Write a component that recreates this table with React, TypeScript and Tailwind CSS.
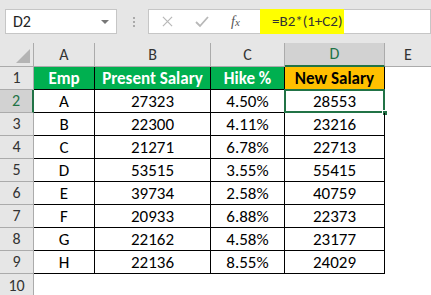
import React from 'react'

const rows = [
  ['A', '27323', '4.50%', '28553'],
  ['B', '22300', '4.11%', '23216'],
  ['C', '21271', '6.78%', '22713'],
  ['D', '53515', '3.55%', '55415'],
  ['E', '39734', '2.58%', '40759'],
  ['F', '20933', '6.88%', '22373'],
  ['G', '22162', '4.58%', '23177'],
  ['H', '22136', '8.55%', '24029'],
]

const font = { fontFamily: 'Carlito, "Open Sans", "Liberation Sans", sans-serif' }

export default function App() {
  return (
    <div className="w-[431px] h-[295px] overflow-hidden bg-white text-[17px] leading-none text-black" style={font}>
      {/* Formula bar */}
      <div className="h-[43px] bg-[#e6e6e6] flex items-start pt-[9px] pl-[5px]">
        <div className="w-[112px] h-[25px] bg-white border border-[#c6c6c6] flex items-center justify-between pl-[7px] pr-[7px] text-[#222] text-[16px]">
          <span>D2</span>
          <span className="w-0 h-0 border-l-[4px] border-r-[4px] border-t-[4px] border-l-transparent border-r-transparent border-t-[#777]" />
        </div>
        <div className="w-[15px] h-[25px] flex flex-col items-center justify-center gap-[2px] ml-[9px]">
          <span className="w-[2px] h-[2px] bg-[#aaa]" />
          <span className="w-[2px] h-[2px] bg-[#aaa]" />
          <span className="w-[2px] h-[2px] bg-[#aaa]" />
        </div>
        <div className="ml-[7px] h-[25px] flex-1 bg-white border border-[#c6c6c6] flex items-center">
          <div className="w-[111px] h-full flex items-center">
            <svg width="11" height="11" viewBox="0 0 12 12" className="ml-[13px]">
              <path d="M1 1 L11 11 M11 1 L1 11" stroke="#b8b8b8" strokeWidth="1.3" />
            </svg>
            <svg width="14" height="12" viewBox="0 0 14 12" className="ml-[22px]">
              <path d="M1 6 L5 10 L13 1" stroke="#b8b8b8" strokeWidth="1.8" fill="none" />
            </svg>
            <span className="ml-[22px] italic text-[14px] text-[#555]" style={{ fontFamily: '"Liberation Serif", serif' }}>
              f<span className="text-[11px]">x</span>
            </span>
          </div>
          <div className="h-[25px] -my-px bg-[#ffff00] flex items-center pl-[12px] text-[#333] w-[84px] whitespace-nowrap text-[15px]">
            =B2*(1+C2)
          </div>
        </div>
      </div>

      {/* Column headers */}
      <div className="flex h-[24px] bg-[#e6e6e6] text-[#333] border-b border-[#ababab] text-[16px]">
        <div className="w-[34px] border-r border-[#ababab] relative">
          <svg width="14" height="14" className="absolute right-[3px] bottom-[3px]">
            <polygon points="14,0 14,14 0,14" fill="#b4b4b4" />
          </svg>
        </div>
        <div className="w-[61px] border-r border-[#ababab] flex items-center justify-center">A</div>
        <div className="w-[116px] border-r border-[#ababab] flex items-center justify-center">B</div>
        <div className="w-[74px] border-r border-[#ababab] flex items-center justify-center">C</div>
        <div className="w-[100px] border-r border-[#ababab] bg-[#d2d2d2] border-b-2 border-b-[#217346] -mb-px flex items-center justify-center text-[#217346]">D</div>
        <div className="flex-1 flex items-center justify-center">E</div>
      </div>

      {/* Header row */}
      <div className="flex h-[23px]">
        <div className="w-[34px] bg-[#e6e6e6] border-r border-b border-[#ababab] flex items-center justify-center text-[#333] text-[16px]">1</div>
        <div className="w-[61px] bg-[#00b050] text-white font-bold border-r border-b border-black flex items-center justify-center">Emp</div>
        <div className="w-[116px] bg-[#00b050] text-white font-bold border-r border-b border-black flex items-center justify-center">Present Salary</div>
        <div className="w-[74px] bg-[#00b050] text-white font-bold border-r border-b border-black flex items-center justify-center">Hike %</div>
        <div className="w-[100px] bg-[#ffc000] text-black font-bold border-r border-b border-black flex items-center justify-center">New Salary</div>
        <div className="flex-1" />
      </div>

      {rows.map((r, i) => (
        <div key={i} className="flex h-[23px]">
          <div
            className={
              i === 0
                ? 'w-[34px] bg-[#d2d2d2] border-r-2 border-r-[#217346] border-b border-b-[#ababab] flex items-center justify-center text-[#217346] text-[16px]'
                : 'w-[34px] bg-[#e6e6e6] border-r border-b border-[#ababab] flex items-center justify-center text-[#333] text-[16px]'
            }
          >
            {i + 2}
          </div>
          <div className="w-[61px] border-r border-b border-black flex items-center justify-center">{r[0]}</div>
          <div className="w-[116px] border-r border-b border-black flex items-center justify-center">{r[1]}</div>
          <div className="w-[74px] border-r border-b border-black flex items-center justify-center">{r[2]}</div>
          <div className="w-[100px] border-r border-b border-black flex items-center justify-center relative">
            {i === 0 && (
              <>
                <span className="absolute -left-px -top-px -right-px -bottom-px border-2 border-[#217346]" />
                <span className="absolute -right-[4px] -bottom-[4px] w-[6px] h-[6px] bg-[#217346] border border-white" />
              </>
            )}
            {r[3]}
          </div>
          <div className="flex-1" />
        </div>
      ))}

      <div className="flex h-[23px]">
        <div className="w-[34px] bg-[#e6e6e6] border-r border-[#ababab] flex items-center justify-center text-[#333] text-[16px]">10</div>
        <div className="flex-1" />
      </div>
    </div>
  )
}
